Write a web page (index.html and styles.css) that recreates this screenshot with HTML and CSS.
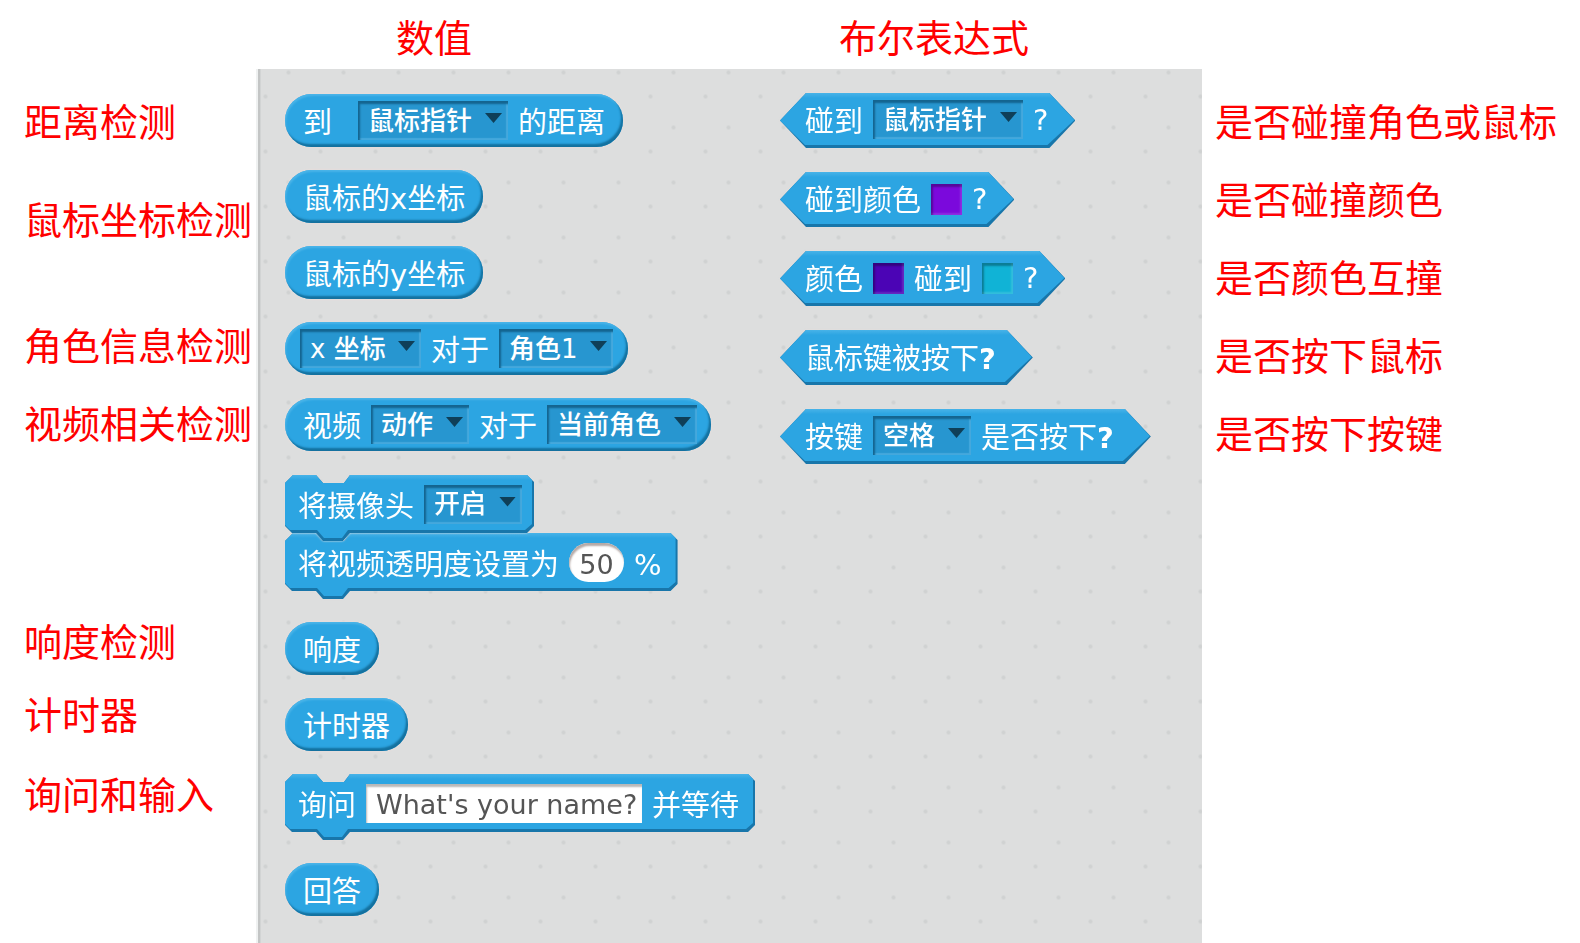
FILE: index.html
```html
<!DOCTYPE html>
<html lang="zh-CN">
<head>
<meta charset="utf-8">
<title>侦测积木</title>
<link rel="stylesheet" href="styles.css">
</head>
<body>
<main class="page">
  <section class="notes notes-left">
    <p class="note">距离检测</p>
    <p class="note note-pair">鼠标坐标检测</p>
    <p class="note note-sprite">角色信息检测</p>
    <p class="note note-video">视频相关检测</p>
    <p class="note note-loud">响度检测</p>
    <p class="note note-timer">计时器</p>
    <p class="note note-ask">询问和输入</p>
  </section>

  <section class="center">
    <header class="heads">
      <h2 class="head head-value">数值</h2>
      <h2 class="head head-bool">布尔表达式</h2>
    </header>
    <div class="panel">
      <div class="column">
        <div class="blocks">
          <div class="block pill"><span class="word word-wide">到</span><span class="pick"><select aria-label="到"><option>鼠标指针</option></select></span><span class="word">的距离</span></div>
          <div class="block pill"><span class="word">鼠标的x坐标</span></div>
          <div class="block pill"><span class="word">鼠标的y坐标</span></div>
          <div class="block pill pill-snug"><span class="pick"><select aria-label="属性"><option>x 坐标</option></select></span><span class="word">对于</span><span class="pick"><select aria-label="角色"><option>角色1</option></select></span></div>
          <div class="block pill pill-end"><span class="word">视频</span><span class="pick"><select aria-label="视频"><option>动作</option></select></span><span class="word">对于</span><span class="pick"><select aria-label="对于"><option>当前角色</option></select></span></div>
        </div>
        <div class="script">
          <div class="block stack stack-over"><span class="word">将摄像头</span><span class="pick"><select aria-label="将摄像头"><option>开启</option></select></span></div>
          <div class="block stack stack-next"><label class="word" for="alpha">将视频透明度设置为</label><input class="number" id="alpha" type="text" value="50"><span class="word">%</span></div>
        </div>
        <div class="blocks blocks-low">
          <div class="block pill"><span class="word">响度</span></div>
          <div class="block pill"><span class="word">计时器</span></div>
          <div class="block stack stack-ask"><label class="word" for="ask">询问</label><input class="text" id="ask" type="text" value="What's your name?"><span class="word">并等待</span></div>
          <div class="block pill"><span class="word">回答</span></div>
        </div>
      </div>
      <div class="column">
        <div class="blocks blocks-bool">
          <div class="block hex"><span class="word">碰到</span><span class="pick"><select aria-label="碰到"><option>鼠标指针</option></select></span><span class="word word-mark">?</span></div>
          <div class="block hex"><label class="word" for="c1">碰到颜色</label><input class="swatch" id="c1" type="color" value="#7b09dc"><span class="word word-mark">?</span></div>
          <div class="block hex"><label class="word" for="c2">颜色</label><input class="swatch" id="c2" type="color" value="#4b04b5"><label class="word" for="c3">碰到</label><input class="swatch" id="c3" type="color" value="#10b3d6"><span class="word word-mark">?</span></div>
          <div class="block hex"><span class="word">鼠标键被按下<b class="mark">?</b></span></div>
          <div class="block hex"><span class="word">按键</span><span class="pick"><select aria-label="按键"><option>空格</option></select></span><span class="word">是否按下<b class="mark">?</b></span></div>
        </div>
      </div>
    </div>
  </section>

  <section class="notes notes-right">
    <p class="note">是否碰撞角色或鼠标</p>
    <p class="note">是否碰撞颜色</p>
    <p class="note">是否颜色互撞</p>
    <p class="note">是否按下鼠标</p>
    <p class="note">是否按下按键</p>
  </section>
</main>
</body>
</html>
```

FILE: styles.css
```css
* {
  box-sizing: border-box;
}

body {
  margin: 0;
  background: #fff;
  font-family: "DejaVu Sans", "Noto Sans CJK SC", sans-serif;
}

.page {
  display: grid;
  grid-template-columns: 256px minmax(0, 1fr) 378px;
  min-height: 100vh;
}

/* red annotations */
.note,
.head {
  margin: 0;
  color: #f00;
  font-family: "Noto Sans CJK SC", sans-serif;
  font-size: 38px;
  font-weight: 400;
  line-height: 38px;
  white-space: nowrap;
}

.notes {
  display: flex;
  flex-direction: column;
  padding-top: 101px;
}

.notes-left {
  padding-left: 24px;
}

.notes-right {
  gap: 40px;
  padding-left: 13px;
}

.note-pair { margin-top: 60px; }
.note-sprite { margin-top: 88px; }
.note-video { margin-top: 40px; }
.note-loud { margin-top: 180px; }
.note-timer { margin-top: 35px; }
.note-ask { margin-top: 42px; }

.center {
  display: flex;
  flex-direction: column;
}

.heads,
.panel {
  display: grid;
  grid-template-columns: 495px minmax(0, 1fr);
  padding-left: 29px;
}

.heads {
  height: 69px;
  padding-top: 17px;
}

.head-value { padding-left: 111px; }
.head-bool { padding-left: 59px; }

/* block palette */
.panel {
  flex: 1;
  padding-top: 24px;
  padding-bottom: 16px;
  background-color: #dddede;
  background-image:
    linear-gradient(to right, #eff1f1 0 2px, #c3c5c5 2px 4px, #d2d4d4 4px 5px, transparent 5px),
    radial-gradient(circle at center, #d0d2d2 1px, transparent 3px),
    radial-gradient(circle at center, #d0d2d2 1px, transparent 3px);
  background-size: 100% 100%, 55px 55px, 55px 55px;
  background-position: 0 0, 5px -24px, -18px 0;
}

.blocks {
  display: flex;
  flex-direction: column;
  align-items: flex-start;
  gap: 23px;
  padding-top: 1px;
}

.blocks-bool {
  gap: 24px;
  padding-top: 0;
}

.blocks-low {
  margin-top: 22px;
}

.script {
  margin-top: 24px;
}

.block {
  position: relative;
  z-index: 0;
  display: flex;
  align-items: center;
  gap: 10px;
  width: max-content;
  color: #fff;
}

.word {
  padding-top: 5px;
  font-size: 29px;
  line-height: 32px;
  white-space: nowrap;
}

.word-wide { padding-right: 16px; }
.word-mark { padding-top: 0; }
.mark { padding-right: 10px; }

.pill {
  height: 53px;
  padding: 0 18px 0 18px;
  border-radius: 27px;
  background: #2ca5e2;
  box-shadow:
    inset -2px -3px 2px #14719f,
    inset 1px 2px 2px #4ab4e8,
    0 0 2px 1px #e6dedc;
}

.pill-snug { padding: 0 15px; }
.pill-end { padding-right: 14px; }

/* two layers: the dark rim fills the outline, the face stops short of its lower right */
.stack::before,
.stack::after,
.hex::before,
.hex::after {
  content: "";
  position: absolute;
  z-index: -1;
  inset: 0;
  background: #1876aa;
}

.stack::after,
.hex::after {
  background: linear-gradient(#48b3e8, #2ca5e2 5px);
}

.stack {
  height: 66px;
  padding: 0 12px 8px 13px;
  filter: drop-shadow(0 0 1px #e6dedc);
}

.stack::before {
  clip-path: polygon(0 8px, 8px 0, 31px 0, 38px 8px, 59px 8px, 65px 0, calc(100% - 7px) 0, 100% 7px, 100% calc(100% - 15px), calc(100% - 7px) calc(100% - 8px), 65px calc(100% - 8px), 58px 100%, 38px 100%, 31px calc(100% - 8px), 7px calc(100% - 8px), 0 calc(100% - 15px));
}

.stack::after {
  clip-path: polygon(0 8px, 8px 0, 31px 0, 38px 8px, 59px 8px, 65px 0, calc(100% - 7px) 0, calc(100% - 2px) 5px, calc(100% - 2px) calc(100% - 17px), calc(100% - 9px) calc(100% - 11px), 63px calc(100% - 11px), 57px calc(100% - 3px), 39px calc(100% - 3px), 32px calc(100% - 11px), 5px calc(100% - 11px), 0 calc(100% - 16px));
}

.stack-over { z-index: 1; }

.stack-next {
  margin-top: -8px;
  padding-right: 16px;
}

.stack-ask { padding-right: 16px; }

.hex {
  height: 55px;
  padding: 0 27px 2px 25px;
  filter: drop-shadow(0 0 1px #e6dedc);
}

.hex::before {
  clip-path: polygon(0 50%, 26px 0, calc(100% - 26px) 0, 100% 50%, calc(100% - 26px) 100%, 26px 100%);
}

.hex::after {
  clip-path: polygon(0 50%, 26px 0, calc(100% - 26px) 0, calc(100% - 1px) 49%, calc(100% - 28px) calc(100% - 3px), 25px calc(100% - 3px));
}

/* fields */
.pick {
  position: relative;
  display: flex;
}

.pick::after {
  content: "";
  position: absolute;
  top: 12px;
  right: 6px;
  width: 17px;
  height: 10px;
  background: #0f3f58;
  clip-path: polygon(0 0, 100% 0, 50% 100%);
  pointer-events: none;
}

select {
  appearance: none;
  height: 39px;
  margin: 0;
  padding: 0 35px 0 10px;
  border: 0;
  border-radius: 0;
  background: #2796d0;
  box-shadow: inset 2px 3px 2px #14648f, inset -2px -2px 1px #45a8dc;
  color: #fff;
  font-family: inherit;
  font-size: 26px;
  font-weight: 500;
  line-height: 32px;
}

.number,
.text {
  height: 39px;
  margin: 0;
  border: 0;
  background: #fff;
  color: #555;
  font-family: "DejaVu Sans", sans-serif;
  font-size: 27px;
}

.number {
  width: 55px;
  padding: 4px 0 0;
  border-radius: 20px;
  box-shadow: inset 1px 3px 2px #b5a9a6;
  text-align: center;
}

.text {
  width: 276px;
  padding: 2px 0 0 10px;
  box-shadow: inset 1px 3px 2px #b8b8b8;
}

.swatch {
  appearance: none;
  width: 31px;
  height: 31px;
  margin: 2px 0 0;
  padding: 0;
  border: 0;
  background: none;
}

.swatch::-webkit-color-swatch-wrapper {
  padding: 0;
}

.swatch::-webkit-color-swatch {
  border: 0;
  border-radius: 0;
  box-shadow: inset 2px 3px 2px rgb(0 0 0 / 30%), inset -2px -2px 2px rgb(255 255 255 / 15%);
}
```
